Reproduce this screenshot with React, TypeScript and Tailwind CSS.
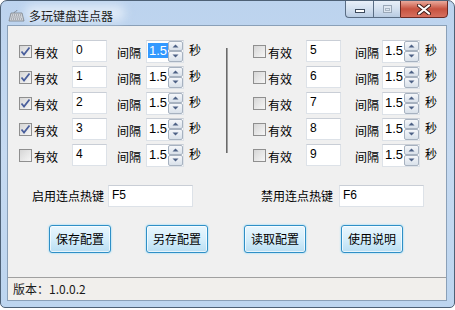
import React from "react";

const cjk = "font-['Noto_Sans_CJK_SC','Noto_Sans',sans-serif]";
const latin = "font-['Liberation_Sans','Noto_Sans_CJK_SC',sans-serif]";

const CheckBox = ({ checked }: { checked: boolean }) => (
  <div className="w-[13px] h-[13px] border border-[#8f8f8f] bg-linear-to-br from-[#d6d6d6] to-[#f6f6f6] flex items-center justify-center shrink-0">
    {checked && (
      <svg width="11" height="11" viewBox="0 0 11 11">
        <path
          d="M1.5 5.5 L4 8.5 L9.5 1.5"
          fill="none"
          stroke="#4a5f9c"
          strokeWidth="1.8"
        />
      </svg>
    )}
  </div>
);

const TextBox = ({ value, w }: { value: string; w: string }) => (
  <div
    className={`${w} h-[22px] bg-white border border-[#dde2e8] border-t-[#c9ced6] pl-[3px] pt-[2px] text-[12px] leading-[14px] text-black ${latin} shrink-0`}
  >
    {value}
  </div>
);

const Spinner = ({ selected }: { selected: boolean }) => (
  <div className="w-[38px] h-[23px] flex bg-white border border-[#dde2e8] border-t-[#c9ced6] shrink-0">
    <div className={`flex-1 pl-[1px] pt-[2px] text-[13px] leading-[15px] ${latin}`}>
      <span
        className={
          selected ? "bg-[#3399ff] text-white px-[1px]" : "text-black px-[1px]"
        }
      >
        1.5
      </span>
    </div>
    <div className="w-[17px] flex flex-col">
      <div className="h-[11px] border border-[#a7b2c0] rounded-[2px] bg-linear-to-b from-[#f5f7fa] to-[#d9e1ea] flex items-center justify-center">
        <svg width="7" height="4" viewBox="0 0 7 4">
          <path d="M0.5 3.5 L3.5 0.5 L6.5 3.5 Z" fill="#4d6185" />
        </svg>
      </div>
      <div className="h-[11px] border border-[#a7b2c0] rounded-[2px] bg-linear-to-b from-[#f5f7fa] to-[#d9e1ea] flex items-center justify-center">
        <svg width="7" height="4" viewBox="0 0 7 4">
          <path d="M0.5 0.5 L3.5 3.5 L6.5 0.5 Z" fill="#4d6185" />
        </svg>
      </div>
    </div>
  </div>
);

type RowProps = { idx: number; checked: boolean; selected?: boolean; right?: boolean };

const Row = ({ idx, checked, selected = false, right = false }: RowProps) => (
  <div className={`flex items-center h-[22px] ${cjk} text-[12px] text-black whitespace-nowrap`}>
    <CheckBox checked={checked} />
    <span className="ml-[2px] w-[24px] leading-[14px] mt-[3px]">有效</span>
    <div className="ml-[14px]">
      <TextBox value={String(idx)} w="w-[35px]" />
    </div>
    <span className={`${right ? "ml-[14px]" : "ml-[10px]"} w-[25px] leading-[14px] mt-[3px]`}>
      间隔
    </span>
    <div className={right ? "ml-[2px]" : "ml-[4px]"}>
      <Spinner selected={selected} />
    </div>
    <span className="ml-[5px] leading-[14px] -mt-[2px]">秒</span>
  </div>
);

const WinButton = ({ label }: { label: string }) => (
  <button
    className={`w-[62px] h-[28px] rounded-[3px] border border-[#2f8fc6] bg-linear-to-b from-[#e9f6fd] via-[#d5eefb] to-[#b9def2] shadow-[0_0_2px_#6cd0ff,inset_0_0_0_1px_#ffffffaa] text-[12px] text-black ${cjk} flex items-center justify-center whitespace-nowrap`}
  >
    {label}
  </button>
);

const App = () => {
  const leftRows = [0, 1, 2, 3, 4];
  const rightRows = [5, 6, 7, 8, 9];

  return (
    <div className="w-[455px] h-[310px] bg-white">
      <div className="w-[455px] h-[308px] rounded-t-[7px] rounded-b-[5px] border border-[#4e6176] bg-linear-to-b from-[#bcd3ee] via-[#c6daf1] to-[#bdd5ef] flex flex-col overflow-hidden">
        {/* title bar */}
        <div className="h-[24px] flex items-start relative">
          <div className="absolute left-[24px] top-[4px] w-[100px] h-[16px] rounded-full bg-[#dfeaf7] blur-[5px]" />
          <div className="relative flex items-center mt-[6px] ml-[7px]">
            <svg width="17" height="14" viewBox="0 0 17 14">
              <path d="M3 4 L14 4 L16 12 L1 12 Z" fill="#cfd3d8" stroke="#7a8088" strokeWidth="0.8" />
              <path d="M4 6h9M3.5 8h10M3 10h11" stroke="#6f757d" strokeWidth="0.8" strokeDasharray="1 1" />
              <path d="M6 4 C6 2 9 3 9 1" fill="none" stroke="#7a8088" strokeWidth="0.8" />
            </svg>
            <span className={`ml-[4px] text-[12px] text-[#1c1c1c] ${cjk}`}>多玩键盘连点器</span>
          </div>
          <div className="relative ml-auto mr-[6px] flex h-[18px] -mt-[1px]">
            <div className="w-[28px] h-[18px] border border-[#5a6d84] border-r-0 rounded-bl-[4px] bg-linear-to-b from-[#e8eff8] via-[#d3e0ef] to-[#b8cbe2] flex items-end justify-center pb-[4px]">
              <div className="w-[10px] h-[4px] bg-white border border-[#3d4a5c]" />
            </div>
            <div className="w-[27px] h-[18px] border border-[#5a6d84] border-r-0 bg-linear-to-b from-[#e8eff8] via-[#d3e0ef] to-[#b8cbe2] flex items-center justify-center">
              <div className="w-[9px] h-[8px] border border-[#9aa8b8] bg-[#dfe7f1] flex items-center justify-center">
                <div className="w-[5px] h-[3px] border border-[#a9b6c4]" />
              </div>
            </div>
            <div className="w-[48px] h-[18px] border border-[#6b2a24] rounded-br-[4px] bg-linear-to-b from-[#e9a99c] via-[#c7523f] to-[#d6705f] flex items-center justify-center">
              <svg width="14" height="11" viewBox="0 0 14 11">
                <path d="M2 1.5 L12 9.5 M12 1.5 L2 9.5" stroke="#3f1c18" strokeWidth="4" strokeLinecap="round" />
                <path d="M2 1.5 L12 9.5 M12 1.5 L2 9.5" stroke="#ffffff" strokeWidth="2.2" strokeLinecap="round" />
              </svg>
            </div>
          </div>
        </div>

        {/* client area */}
        <div className="ml-[6px] mr-[7px] flex-1 flex flex-col border border-[#8aa0b8] bg-[#f0f0f0]">
          <div className="flex-1 flex flex-col pt-[14px]">
            <div className="flex">
              <div className="ml-[11px] w-[196px] flex flex-col gap-[4px]">
                {leftRows.map((i) => (
                  <Row key={i} idx={i} checked={i < 4} selected={i === 0} />
                ))}
              </div>
              <div className="ml-[11px] mt-[8px] w-[2px] h-[105px] bg-[#6a6a6a] border-r border-[#a0a0a0]" />
              <div className="ml-[25px] flex flex-col gap-[4px]">
                {rightRows.map((i) => (
                  <Row key={i} idx={i} checked={false} right />
                ))}
              </div>
            </div>

            <div className={`flex items-center mt-[19px] pl-[24px] text-[12px] text-black whitespace-nowrap ${cjk}`}>
              <span className="w-[72px] leading-[14px]">启用连点热键</span>
              <div className="ml-[4px]">
                <TextBox value="F5" w="w-[85px]" />
              </div>
              <span className="ml-[68px] w-[73px] leading-[14px]">禁用连点热键</span>
              <div className="ml-[5px]">
                <TextBox value="F6" w="w-[85px]" />
              </div>
            </div>

            <div className="flex mt-[18px] pl-[41px] gap-[35px]">
              <WinButton label="保存配置" />
              <WinButton label="另存配置" />
              <div className="ml-[1px]">
                <WinButton label="读取配置" />
              </div>
              <WinButton label="使用说明" />
            </div>
          </div>

          <div className="h-[23px] border-t border-[#a0a0a0] bg-[#f1efec] flex items-center pl-[5px]">
            <span className={`text-[12px] text-[#1a1a1a] ${cjk}`}>版本：1.0.0.2</span>
          </div>
        </div>

        <div className="h-[6px]" />
      </div>
    </div>
  );
};

export default App;
